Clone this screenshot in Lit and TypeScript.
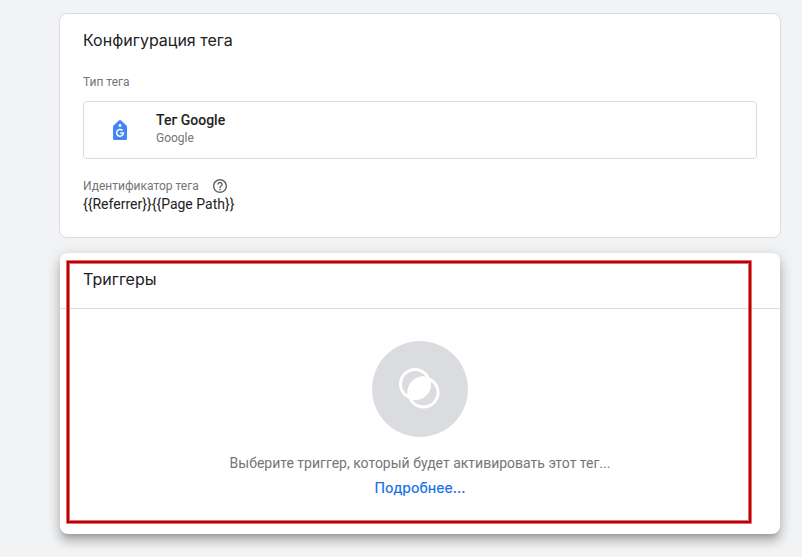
import { LitElement, html, css } from "lit";
import { customElement } from "lit/decorators.js";

@customElement("tag-config-card")
class TagConfigCard extends LitElement {
  static styles = css`
    :host {
      display: block;
      box-sizing: border-box;
      background: #fff;
      border: 1px solid #dadce0;
      border-radius: 8px;
      padding: 14px 23px 23px;
    }
    h2 {
      margin: 0;
      font: 400 16px/24px Inter, "Open Sans", sans-serif;
      color: #202124;
    }
    .label {
      margin: 0;
      font-size: 12px;
      line-height: 16px;
      color: #757575;
    }
    .type-label {
      margin: 22px 0 11px;
    }
    .type {
      display: flex;
      align-items: center;
      box-sizing: border-box;
      width: 100%;
      height: 58px;
      padding: 0 24px;
      gap: 24px;
      background: #fff;
      border: 1px solid #dadce0;
      border-radius: 4px;
      font: inherit;
      text-align: left;
    }
    .type svg {
      display: block;
      width: 24px;
      height: 24px;
    }
    .names {
      display: flex;
      flex-direction: column;
      padding-bottom: 4px;
    }
    .name {
      font-size: 14px;
      font-weight: 500;
      line-height: 20px;
      color: #212121;
    }
    .vendor {
      font-size: 12px;
      line-height: 16px;
      color: #757575;
    }
    .id-label {
      display: flex;
      align-items: center;
      gap: 14px;
      margin-top: 19px;
    }
    .help {
      display: block;
      padding: 0;
      border: 0;
      background: none;
      color: #5f6368;
    }
    .help svg {
      display: block;
      width: 14px;
      height: 14px;
    }
    .value {
      margin: 0;
      font-size: 14px;
      line-height: 20px;
      color: #212121;
    }
  `;

  render() {
    return html`
      <h2>Конфигурация тега</h2>
      <p class="label type-label" id="type">Тип тега</p>
      <button class="type" aria-describedby="type">
        <svg viewBox="0 0 24 24" aria-hidden="true">
          <path
            fill="#4285f4"
            d="M11 2.500q1-.8 2 0l5 4.500q1 1 1 2v11.500q0 1.500-1.500 1.500h-11q-1.500 0-1.500-1.500v-11.500q0-1 1-2z"
          />
          <circle cx="12" cy="7.500" r="1.400" fill="#fff" />
          <path
            d="M14.600 12.600A3.400 3.400 0 1 0 15.400 15.100H12.200"
            fill="none"
            stroke="#fff"
            stroke-width="1.500"
          />
        </svg>
        <span class="names">
          <span class="name">Тег Google</span>
          <span class="vendor">Google</span>
        </span>
      </button>
      <div class="label id-label">
        <span>Идентификатор тега</span>
        <button class="help" aria-label="Справка">
          <svg viewBox="2 2 20 20" aria-hidden="true" fill="currentColor">
            <path
              d="M11 18h2v-2h-2v2zm1-16C6.480 2 2 6.480 2 12s4.480 10 10 10 10-4.480 10-10S17.520 2 12 2zm0 18c-4.410 0-8-3.590-8-8s3.590-8 8-8 8 3.590 8 8-3.590 8-8 8zm0-14c-2.210 0-4 1.790-4 4h2c0-1.100.9-2 2-2s2 .9 2 2c0 2-3 1.750-3 5h2c0-2.250 3-2.500 3-5 0-2.210-1.790-4-4-4z"
            />
          </svg>
        </button>
      </div>
      <p class="value">{{Referrer}}{{Page Path}}</p>
    `;
  }
}

@customElement("triggers-card")
class TriggersCard extends LitElement {
  static styles = css`
    :host {
      display: block;
      position: relative;
      background: #fff;
      border-radius: 8px;
      box-shadow:
        0 5px 5px -3px rgba(0, 0, 0, 0.2),
        0 8px 10px 1px rgba(0, 0, 0, 0.14),
        0 3px 14px 2px rgba(0, 0, 0, 0.12);
    }
    h2 {
      margin: 0;
      padding: 14px 23px 17px;
      border-bottom: 1px solid #dadce0;
      font: 400 16px/24px Inter, "Open Sans", sans-serif;
      color: #202124;
    }
    .empty {
      display: flex;
      flex-direction: column;
      align-items: center;
      padding: 32px 24px 36px;
      text-align: center;
    }
    .disc {
      display: block;
      width: 96px;
      height: 96px;
      margin-bottom: 16px;
    }
    p {
      margin: 0;
      font-size: 14px;
      line-height: 20px;
      color: #757575;
    }
    a {
      margin-top: 5px;
      font: 500 14px/20px Inter, "Open Sans", sans-serif;
      color: #1a73e8;
      text-decoration: none;
    }
    .highlight {
      position: absolute;
      inset: 7px 28px 10px 6px;
      border: 4px solid #e07070;
      border-radius: 1px;
      pointer-events: none;
    }
    .highlight::before {
      content: "";
      position: absolute;
      inset: -3px;
      border: 2px solid #c00000;
    }
  `;

  render() {
    return html`
      <h2>Триггеры</h2>
      <div class="empty">
        <svg class="disc" viewBox="0 0 96 96" aria-hidden="true">
          <circle cx="48" cy="48" r="48" fill="#dadce0" />
          <g fill="none" stroke="#fff" stroke-width="3">
            <circle cx="43" cy="43" r="14.500" />
            <circle cx="51.500" cy="51.500" r="14.500" />
          </g>
          <path fill="#fff" d="M36.800 57.700A15.800 15.800 0 0 1 57.700 36.800A15.800 15.800 0 0 1 36.800 57.700z" />
        </svg>
        <p>Выберите триггер, который будет активировать этот тег...</p>
        <a href="#triggers">Подробнее...</a>
      </div>
      <div class="highlight"></div>
    `;
  }
}

@customElement("app-root")
class AppRoot extends LitElement {
  static styles = css`
    :host {
      display: block;
      box-sizing: border-box;
      min-height: 100vh;
      padding: 13px 21px 23px 59px;
      background: #f1f3f4;
      font-family: Roboto, "Liberation Sans", sans-serif;
    }
    triggers-card {
      margin: 15px 1px 0;
    }
  `;

  render() {
    return html`
      <tag-config-card></tag-config-card>
      <triggers-card></triggers-card>
    `;
  }
}
